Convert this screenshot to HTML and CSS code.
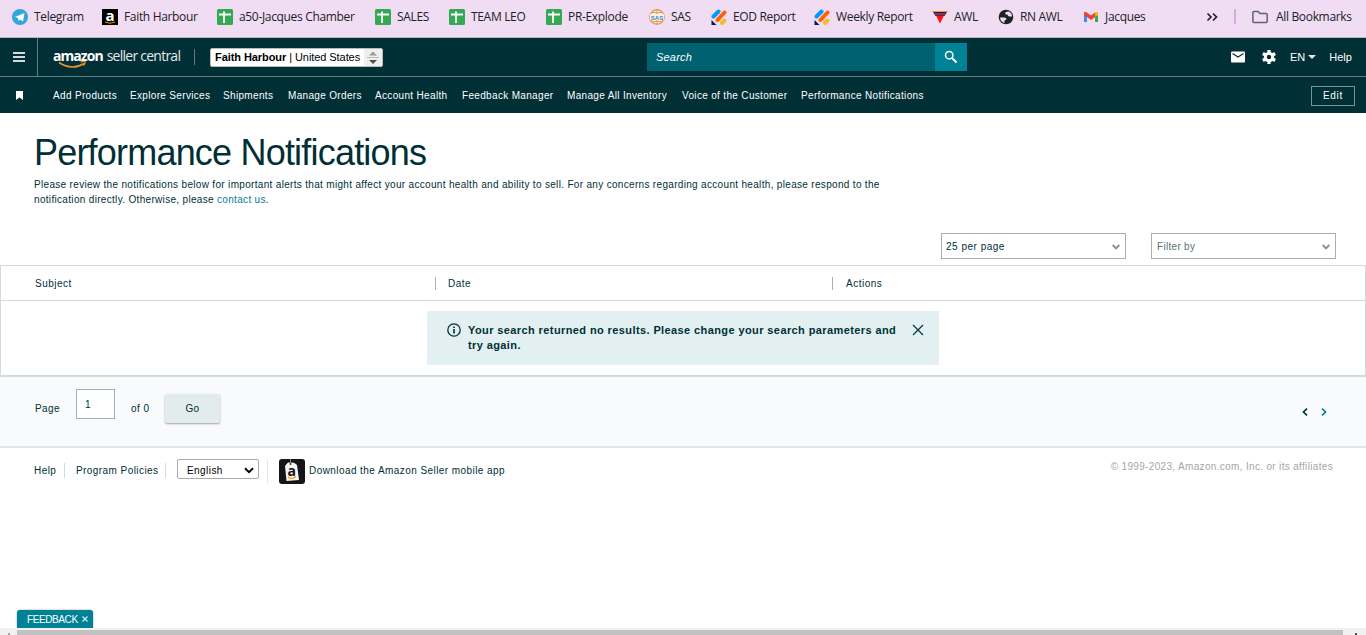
FILE: index.html
```html
<!DOCTYPE html>
<html lang="en">

<head>
    <meta charset="UTF-8">
    <meta name="viewport" content="width=device-width, initial-scale=1.0">
    <title>Performance Notifications</title>
    <link rel="stylesheet" href="styles.css">
</head>

<body>
    <!-- shared icons -->
    <svg class="defs" width="0" height="0">
        <symbol id="sheet" viewBox="0 0 16 16">
            <rect width="16" height="16" rx="1.5" fill="#34a853" />
            <path d="M2 5.500h12M7 2.500v11.500" stroke="#fff" stroke-width="1.800" />
        </symbol>
        <symbol id="report" viewBox="0 0 16 16">
            <path d="M2.500 7.500l5-5" stroke="#0099ff" stroke-width="4" stroke-linecap="round" />
            <path d="M6.500 11l7-7.500" stroke="#ff6100" stroke-width="4" stroke-linecap="round" />
            <path d="M11 14l2.500-2.500" stroke="#ffb629" stroke-width="4" stroke-linecap="round" />
            <path d="M.5 11v5h5z" fill="#0a1551" />
        </symbol>
        <symbol id="chevron" viewBox="0 0 8 6">
            <path d="M.7 1L4 4.400 7.300 1" fill="none" stroke="#879596" stroke-width="2" />
        </symbol>
    </svg>

    <div class="bookmarks">
        <a class="bookmark">
            <svg width="16" height="16" viewBox="0 0 16 16"><circle cx="8" cy="8" r="8" fill="#34a4dc" /><path d="M3 8l9.500-4-1.500 8.500-3-2-1.500 1.500-.5-3z" fill="#fff" /></svg>
            Telegram
        </a>
        <a class="bookmark">
            <svg width="16" height="16" viewBox="0 0 16 16"><rect width="16" height="16" /><text x="8" y="11.500" text-anchor="middle" class="a-letter">a</text><path d="M3 13q5 2.500 10 0" fill="none" stroke="#f90" /></svg>
            Faith Harbour
        </a>
        <a class="bookmark"><svg width="16" height="16"><use href="#sheet" /></svg>a50-Jacques Chamber</a>
        <a class="bookmark"><svg width="16" height="16"><use href="#sheet" /></svg>SALES</a>
        <a class="bookmark"><svg width="16" height="16"><use href="#sheet" /></svg>TEAM LEO</a>
        <a class="bookmark"><svg width="16" height="16"><use href="#sheet" /></svg>PR-Explode</a>
        <a class="bookmark">
            <svg width="16" height="16" viewBox="0 0 16 16"><circle cx="8" cy="8" r="7.200" fill="#fff1e4" stroke="#e8985a" stroke-width="1.400" /><path d="M8 1v14M3 3.500h10M3 12.500h10" stroke="#e8985a" /><rect x="1" y="5" width="14" height="6" fill="#fff1e4" /><text x="8" y="10.500" text-anchor="middle" class="sas">SAS</text></svg>
            SAS
        </a>
        <a class="bookmark"><svg width="16" height="16"><use href="#report" /></svg>EOD Report</a>
        <a class="bookmark"><svg width="16" height="16"><use href="#report" /></svg>Weekly Report</a>
        <a class="bookmark">
            <svg width="16" height="16" viewBox="0 0 16 16"><path d="M.5 2h15l-3 5h-9z" fill="#251947" /><path d="M.5 2.500h15" stroke="#e3a23c" /><path d="M2.500 5h11" stroke="#d95a6a" /><path d="M4 6.500h8L8 14.500z" fill="#ff1016" /></svg>
            AWL
        </a>
        <a class="bookmark">
            <svg width="16" height="16" viewBox="0 0 16 16"><circle cx="8" cy="8" r="7.300" fill="#202124" /><path d="M2 8.500h4.500q2 0 2 2-2 0-2 1.500v2q-4-1-4.500-5.500zM8 3q-1.500 1-.5 2.500h2q0 2 2 2h2.500Q14 4 11 2.500 9.500 2.200 8 3z" fill="#f0ddf4" /></svg>
            RN AWL
        </a>
        <a class="bookmark">
            <svg width="16" height="16" viewBox="0 0 16 16"><path d="M1 4.500V13h3V7z" fill="#4285f4" /><path d="M12 7v6h3V4.500z" fill="#34a853" /><path d="M12 4v4l3-2V3.500q-1-1.500-3 .5z" fill="#fbbc04" /><path d="M1 3.500q.8-1.500 2.500-.3L8 6.600l4.200-3.200V8L8 11 4 8 1 6z" fill="#ea4335" /></svg>
            Jacques
        </a>
        <svg width="12" height="16" viewBox="0 0 12 16"><path d="M1.500 4.500L5 8l-3.500 3.500M7 4.500L10.500 8 7 11.500" fill="none" stroke="#202124" stroke-width="1.700" /></svg>
        <span class="bookmark-divider"></span>
        <a class="bookmark all">
            <svg width="16" height="16" viewBox="0 0 16 16"><path d="M.9 3.500q0-1 1-1H6l2 2h6.200q1 0 1 1v7q0 1-1 1H1.900q-1 0-1-1z" fill="none" stroke="#5f6368" stroke-width="1.500" /></svg>
            All Bookmarks
        </a>
    </div>

    <header class="topbar">
        <button class="menu" aria-label="Menu"><i></i><i></i><i></i></button>
        <div class="logo">
            <span class="logo-amazon">amazon</span><span class="logo-seller">seller central</span>
            <svg class="smile" width="30" height="9" viewBox="0 0 30 9"><path d="M1 2.500Q14 11 26 3.500" fill="none" stroke="#f0932b" stroke-width="1.600" /><path d="M22.500 2.200q4-1.500 4.500-.5t-1.500 4" fill="none" stroke="#f0932b" stroke-width="1.300" /></svg>
        </div>
        <div class="account">
            <span><b>Faith Harbour</b> | United States</span>
            <svg width="18" height="18" viewBox="0 0 18 18"><rect width="18" height="18" fill="#efefef" /><path d="M5 7.500l4-4 4 4z" fill="#9a9a9a" /><path d="M3 9.500h12" stroke="#bbb" /><path d="M5 12h8l-4 4z" fill="#505050" /></svg>
        </div>
        <div class="search">
            <span>Search</span>
            <button aria-label="Search"><svg width="14" height="14" viewBox="0 0 14 14"><circle cx="5.200" cy="5.200" r="3.700" fill="none" stroke="#fff" stroke-width="1.500" /><path d="M8 8l4.500 4.500" stroke="#fff" stroke-width="1.900" /></svg></button>
        </div>
        <div class="tools">
            <svg width="14" height="12" viewBox="0 0 14 12"><rect y=".5" width="14" height="11" rx="1" fill="#fff" /><path d="M1.500 2.500L7 6l5.500-3.500" fill="none" stroke="#002f36" stroke-width="1.200" /></svg>
            <svg class="gear" width="16" height="16" viewBox="0 0 16 16"><circle cx="8" cy="8" r="3.700" fill="none" stroke="#fff" stroke-width="3" /><path d="M8 1v3M8 12v3M1.900 4.500l2.600 1.500M11.500 10l2.600 1.500M14.100 4.500L11.500 6M4.500 10l-2.600 1.500" stroke="#fff" stroke-width="3.200" /></svg>
            <span class="lang">EN</span>
            <i class="caret"></i>
            <span class="help">Help</span>
        </div>
    </header>

    <nav class="favorites">
        <svg width="7" height="10" viewBox="0 0 7 10"><path d="M0 0h7v9L3.500 6.500 0 9z" fill="#fff" /></svg>
        <a>Add Products</a>
        <a>Explore Services</a>
        <a>Shipments</a>
        <a>Manage Orders</a>
        <a>Account Health</a>
        <a>Feedback Manager</a>
        <a>Manage All Inventory</a>
        <a>Voice of the Customer</a>
        <a>Performance Notifications</a>
        <button class="edit">Edit</button>
    </nav>

    <main>
        <h1>Performance Notifications</h1>
        <p class="intro">Please review the notifications below for important alerts that might affect your account health and ability to sell. For any concerns regarding account health, please respond to the<br>notification directly. Otherwise, please <a class="link">contact us</a>.</p>

        <div class="filters">
            <div class="dropdown">25 per page<svg width="8" height="6"><use href="#chevron" /></svg></div>
            <div class="dropdown placeholder">Filter by<svg width="8" height="6"><use href="#chevron" /></svg></div>
        </div>

        <section class="table">
            <div class="table-head">
                <span>Subject</span>
                <span>Date</span>
                <span>Actions</span>
            </div>
            <div class="alert">
                <svg width="14" height="14" viewBox="0 0 14 14"><circle cx="7" cy="7" r="6.200" fill="none" stroke="#002f36" stroke-width="1.300" /><path d="M7 3.500v1.500M7 6v4.500" stroke="#002f36" stroke-width="1.600" /></svg>
                <p>Your search returned no results. Please change your search parameters and<br>try again.</p>
                <svg class="close" width="12" height="12" viewBox="0 0 12 12"><path d="M1 1l10 10M11 1L1 11" stroke="#002f36" stroke-width="1.100" /></svg>
            </div>
        </section>

        <section class="pagination">
            <span class="page-label">Page</span>
            <span class="page-input">1</span>
            <span class="page-total">of 0</span>
            <button class="go">Go</button>
            <svg class="prev" width="6" height="8" viewBox="0 0 6 8"><path d="M5 .7L1.500 4 5 7.300" fill="none" stroke="#002f36" stroke-width="1.700" /></svg>
            <svg class="next" width="6" height="8" viewBox="0 0 6 8"><path d="M1 .7L4.500 4 1 7.300" fill="none" stroke="#008296" stroke-width="1.700" /></svg>
        </section>
    </main>

    <footer class="footer">
        <a class="footer-help">Help</a>
        <a class="footer-policies">Program Policies</a>
        <div class="language">English<svg width="10" height="7" viewBox="0 0 10 7"><path d="M1 1.200l4 4 4-4" fill="none" stroke="#000" stroke-width="2" /></svg></div>
        <a class="app">
            <svg width="26" height="25" viewBox="0 0 26 25"><rect width="26" height="25" rx="3" fill="#151515" /><path d="M9 3.500l6 .2 3 2.300 2 15-12.500 1L6 7z" fill="#f5f5f5" /><path d="M11.500 0v4" stroke="#888" /><circle cx="11.500" cy="5" r="1" fill="#333" /><text x="13" y="16.500" text-anchor="middle" class="app-letter">a</text><path d="M9 18q4 3 8-.5" fill="none" stroke="#f90" stroke-width="1.200" /></svg>
            <span>Download the Amazon Seller mobile app</span>
        </a>
        <span class="copyright">© 1999-2023, Amazon.com, Inc. or its affiliates</span>
    </footer>

    <div class="feedback">FEEDBACK<svg width="6" height="6" viewBox="0 0 6 6"><path d="M.5.500l5 5M5.500.500l-5 5" stroke="#d5eef1" stroke-width="1.200" /></svg></div>
    <div class="scrollbar"><span class="thumb"></span><i class="arrow-left"></i><i class="arrow-right"></i></div>
</body>

</html>
```

FILE: styles.css
```css
* {
    box-sizing: border-box;
}

body {
    margin: 0;
    height: 635px;
    overflow: hidden;
    display: flex;
    flex-direction: column;
    background-color: #fff;
    color: #002f36;
    font-family: "Liberation Sans", Arial, sans-serif;
    font-size: 10px;
    letter-spacing: 0.43px;
    white-space: nowrap;
}

svg {
    display: block;
    flex: none;
    overflow: visible;
}

button {
    font: inherit;
    letter-spacing: inherit;
    padding: 0;
    border: 0;
}

.defs {
    position: absolute;
}

/* bookmarks */
.bookmarks {
    flex: none;
    height: 38px;
    padding: 0 0 4px 12px;
    border-bottom: 1px solid #bdb3c4;
    background-color: #f0ddf4;
    display: grid;
    grid-template-columns: 90px 115px 158px 74px 97px 103px 62px 103px 118px 66px 85px 123px 28px 18px auto;
    align-items: center;
    color: #202124;
    font-family: "Open Sans", "Noto Sans", sans-serif;
    font-size: 12px;
    letter-spacing: -0.33px;
}

.bookmark {
    display: flex;
    align-items: center;
    gap: 6px;
}

.bookmark.all {
    gap: 8px;
}

.bookmark-divider {
    width: 2px;
    height: 15px;
    background-color: #d9a8e2;
}

.a-letter {
    fill: #fff;
    font: bold 15px "Open Sans", sans-serif;
    letter-spacing: 0;
}

.sas {
    fill: #258bc1;
    font: bold 6px "Liberation Sans", sans-serif;
    letter-spacing: 0;
}

/* header */
.topbar {
    flex: none;
    height: 39px;
    border-bottom: 1px solid #667b7f;
    background-color: #002f36;
    color: #fff;
    display: grid;
    grid-template-columns: 52px 143px 452px 320px 1fr;
    align-items: center;
}

.menu {
    width: 38px;
    height: 38px;
    border-right: 1px solid #667b7f;
    background: none;
    display: flex;
    flex-direction: column;
    justify-content: center;
    align-items: center;
    gap: 2px;
}

.menu i {
    width: 12px;
    height: 2px;
    background-color: #d3dbdc;
}

.logo {
    position: relative;
    height: 16px;
    line-height: 14px;
    border-right: 1px solid #667b7f;
    font-family: "Open Sans", sans-serif;
    font-size: 14px;
    letter-spacing: -0.75px;
}

.logo-amazon {
    font-weight: bold;
    letter-spacing: -0.95px;
    margin-left: 1px;
}

.logo-seller {
    margin-left: 4px;
    color: #e3e8e9;
}

.smile {
    position: absolute;
    left: 6px;
    top: 11px;
}

.account {
    margin-left: 15px;
    width: 173px;
    height: 19px;
    padding-left: 4px;
    border: 1px solid #bbb;
    border-radius: 2px;
    background-color: #fff;
    color: #000;
    display: flex;
    justify-content: space-between;
    align-items: center;
    overflow: hidden;
    font-size: 11px;
    letter-spacing: -0.07px;
}

.search {
    height: 28px;
    background-color: #006170;
    display: flex;
    justify-content: space-between;
    align-items: center;
    padding-left: 9px;
    font-size: 11px;
    font-style: italic;
    letter-spacing: 0.2px;
}

.search button {
    width: 32px;
    height: 28px;
    padding-left: 9px;
    background-color: #008296;
}

.tools {
    padding-left: 264px;
    display: flex;
    align-items: center;
    font-size: 11px;
    letter-spacing: 0;
}

.gear {
    margin-left: 16px;
}

.lang {
    margin-left: 13px;
}

.caret {
    margin-left: 3px;
    border: 4px solid transparent;
    border-top-color: #e3e8e9;
    border-bottom: 0;
}

.help {
    margin-left: 13px;
}

.favorites {
    flex: none;
    height: 36px;
    padding: 0 11px 0 16px;
    background-color: #002f36;
    color: #fff;
    display: grid;
    grid-template-columns: 37px 77px 93px 65px 87px 87px 105px 115px 119px 1fr 44px;
    align-items: center;
    line-height: 38px;
    letter-spacing: 0.33px;
}

.edit {
    height: 20px;
    border: 1px solid #7e9194;
    background: none;
    color: #fff;
    line-height: 18px;
    letter-spacing: 0.7px;
}

/* page */
main {
    flex: none;
}

h1 {
    margin: 18px 0 0 34px;
    height: 43px;
    line-height: 43px;
    font-size: 36px;
    font-weight: normal;
    letter-spacing: -0.8px;
}

.intro {
    margin: 3px 0 0 34px;
    line-height: 15px;
    letter-spacing: 0.32px;
}

.link {
    color: #008296;
}

.filters {
    margin: 26px 30px 6px 0;
    display: flex;
    justify-content: flex-end;
    gap: 25px;
}

.dropdown {
    width: 185px;
    height: 26px;
    padding: 0 5px 0 4px;
    border: 1px solid #a2b1b2;
    display: flex;
    align-items: center;
    justify-content: space-between;
    letter-spacing: 0.5px;
}

.dropdown svg {
    margin-top: 2px;
}

.dropdown.placeholder {
    padding-left: 5px;
    color: #5c7175;
    letter-spacing: 0.3px;
}

.table {
    height: 112px;
    border: 1px solid #d5dbdb;
    border-bottom-width: 2px;
}

.table-head {
    height: 35px;
    padding-left: 34px;
    border-bottom: 1px solid #d5dbdb;
    display: grid;
    grid-template-columns: 400px 397px auto;
    align-items: center;
    letter-spacing: 0.5px;
}

.table-head span + span {
    padding-left: 12px;
    border-left: 1px solid #a2b1b2;
    height: 13px;
    line-height: 13px;
}

.table-head span:last-child {
    padding-left: 13px;
}

.alert {
    width: 512px;
    height: 54px;
    margin: 10px 0 0 426px;
    padding: 12px 15px 0 20px;
    background-color: #e3f0f2;
    display: flex;
    font-size: 11px;
    font-weight: bold;
    line-height: 15px;
    letter-spacing: 0.4px;
}

.alert p {
    margin: 0;
    flex: 1;
    padding-left: 7px;
}

.close {
    margin-top: 1px;
}

.pagination {
    height: 71px;
    padding-left: 35px;
    border-bottom: 2px solid #e0e5e7;
    background-color: #f8fafc;
    display: grid;
    grid-template-columns: 41px 55px 34px 1137px 19px auto;
    align-items: start;
}

.page-label,
.page-total {
    margin-top: 26px;
}

.page-input {
    width: 39px;
    height: 30px;
    margin-top: 12px;
    padding-left: 8px;
    border: 1px solid #a2b1b2;
    background-color: #fff;
    line-height: 29px;
}

.go {
    width: 55px;
    height: 29px;
    margin-top: 17px;
    border-radius: 2px;
    background-color: #e3eced;
    box-shadow: 0 1px 2px rgba(0, 0, 0, 0.35);
    color: #002f36;
}

.prev,
.next {
    margin-top: 31px;
}

/* footer */
.footer {
    flex: none;
    height: 50px;
    padding: 11px 33px 0 34px;
    display: flex;
    align-items: flex-start;
    line-height: 15px;
}

.footer-help,
.footer-policies {
    margin-top: 4px;
    height: 15px;
    border-right: 1px solid #d5dbdb;
}

.footer-help {
    width: 31px;
}

.footer-policies {
    width: 101px;
    padding-left: 11px;
}

.language {
    width: 82px;
    height: 20px;
    margin-left: 11px;
    padding: 2px 4px 0 9px;
    border: 1px solid #aaa;
    border-radius: 2px;
    color: #000;
    display: flex;
    align-items: center;
    justify-content: space-between;
}

.app {
    margin-left: 8px;
    height: 25px;
    padding-left: 11px;
    border-left: 1px solid #e3e8e9;
    display: flex;
    align-items: center;
    gap: 4px;
}

.app span {
    padding-bottom: 2px;
}

.app-letter {
    fill: #111;
    font: bold 14px "Open Sans", sans-serif;
}

.copyright {
    margin-left: auto;
    color: #a6a6a6;
    letter-spacing: 0.33px;
}

.feedback {
    position: absolute;
    left: 17px;
    top: 610px;
    width: 76px;
    height: 18px;
    padding-left: 10px;
    border-radius: 3px 3px 0 0;
    background-color: #008296;
    box-shadow: 0 0 2px rgba(0, 0, 0, 0.4);
    color: #fff;
    display: flex;
    align-items: center;
    gap: 4px;
    letter-spacing: -0.4px;
}

.scrollbar {
    margin-top: auto;
    position: relative;
    height: 7px;
    padding: 2px 23px 0 17px;
    background-color: #f1f1f1;
}

.thumb {
    display: block;
    height: 5px;
    background-color: #c1c1c1;
}

.arrow-left,
.arrow-right {
    position: absolute;
    bottom: 0;
    width: 2px;
    height: 2px;
    background-color: #a3a3a3;
}

.arrow-left {
    left: 8px;
}

.arrow-right {
    right: 9px;
    background-color: #505050;
}
```
